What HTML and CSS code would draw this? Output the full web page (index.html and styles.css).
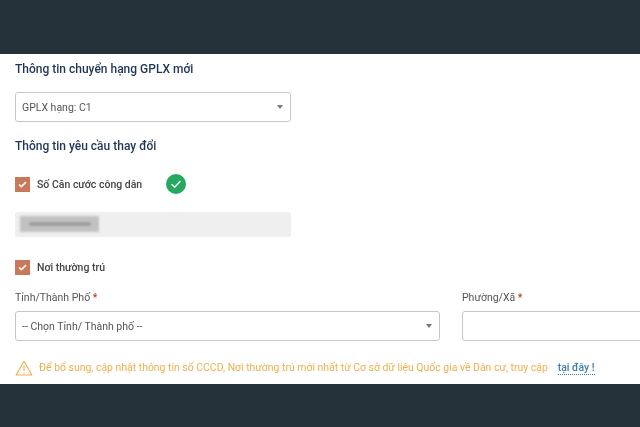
FILE: index.html
```html
<!DOCTYPE html>
<html lang="vi">
<head>
<meta charset="utf-8">
<title>Thông tin chuyển hạng GPLX</title>
<link rel="stylesheet" href="styles.css">
</head>
<body>
<div class="bar-top"></div>
<main class="content">
  <h2 class="heading first">Thông tin chuyển hạng GPLX mới</h2>
  <div class="select wide"><span>GPLX hạng: C1</span><i class="caret"></i></div>
  <h2 class="heading second">Thông tin yêu cầu thay đổi</h2>
  <div class="check-row one">
    <span class="checkbox"><svg width="11" height="9" viewBox="0 0 11 9"><path d="M2 4.5 4.4 6.6 9 2.2" fill="none" stroke="#fff" stroke-width="1.6"/></svg></span>
    <span class="check-label">Số Căn cước công dân</span>
    <span class="ok"><svg width="20" height="20" viewBox="0 0 20 20"><circle cx="10" cy="10" r="10" fill="#27a860"/><path d="M5.6 10.2 8.7 13.2 14.4 7" fill="none" stroke="#fff" stroke-width="1.3"/></svg></span>
  </div>
  <div class="readonly"><span class="masked"><span class="masked-line"></span></span></div>
  <div class="check-row two">
    <span class="checkbox"><svg width="11" height="9" viewBox="0 0 11 9"><path d="M2 4.5 4.4 6.6 9 2.2" fill="none" stroke="#fff" stroke-width="1.6"/></svg></span>
    <span class="check-label">Nơi thường trú</span>
  </div>
  <div class="fields">
    <div class="field city">
      <label class="field-label">Tỉnh/Thành Phố <b>*</b></label>
      <div class="select"><span>-- Chọn Tỉnh/ Thành phố --</span><i class="caret"></i></div>
    </div>
    <div class="field ward">
      <label class="field-label">Phường/Xã <b>*</b></label>
      <div class="select"></div>
    </div>
  </div>
  <p class="notice">
    <svg class="warn" width="18" height="16" viewBox="0 0 18 16"><path d="M9 1.2 16.9 15H1.1Z" fill="none" stroke="#eeb04d" stroke-width="1.1" stroke-linejoin="round"/><path d="M9 5.5V11M9 12.2V13.5" stroke="#eeb04d" stroke-width="1.1"/></svg>
    <span class="notice-text">Để bổ sung, cập nhật thông tin số CCCD, Nơi thường trú mới nhất từ Cơ sở dữ liệu Quốc gia về Dân cư, truy cập</span>
    <a class="link">tại đây !</a>
  </p>
</main>
<div class="bar-bottom"></div>
</body>
</html>
```
FILE: styles.css
```css
html, body { margin: 0; padding: 0; }
body {
  width: 640px;
  height: 427px;
  overflow: hidden;
  display: flex;
  flex-direction: column;
  background: #fff;
  font-family: Roboto, "Liberation Sans", sans-serif;
}
.bar-top { height: 54px; background: #24333a; flex: none; }
.bar-bottom { height: 43px; background: #24333a; flex: none; }
.content {
  height: 330px;
  flex: none;
  padding-left: 15px;
  overflow: hidden;
  filter: blur(0.35px);
}
.heading {
  margin: 0;
  font-size: 12px;
  line-height: 16px;
  font-weight: 500;
  color: #1f3556;
}
.heading.first { padding-top: 7px; }
.heading.second { margin-top: 16px; }
.select {
  box-sizing: border-box;
  height: 30px;
  display: flex;
  align-items: center;
  justify-content: space-between;
  padding: 0 7px 0 6px;
  background: #fff;
  border: 1px solid #c4c7ca;
  border-radius: 3px;
  font-size: 10.5px;
  color: #555;
}
.select.wide { width: 276px; margin-top: 15px; }
.caret {
  width: 0;
  height: 0;
  border-left: 3px solid transparent;
  border-right: 3px solid transparent;
  border-top: 4px solid #777;
}
.check-row { display: flex; align-items: center; }
.check-row.one { margin-top: 20px; height: 20px; }
.check-row.two { margin-top: 23px; height: 14px; }
.checkbox {
  width: 15px;
  height: 15px;
  display: flex;
  align-items: center;
  justify-content: center;
  background: #c9785a;
  flex: none;
}
.check-label {
  margin-left: 7px;
  font-size: 10.5px;
  font-weight: 500;
  color: #444;
}
.ok { margin-left: 24px; display: flex; }
.readonly {
  box-sizing: border-box;
  width: 276px;
  height: 25px;
  margin-top: 18px;
  padding: 4px 5px;
  background: #efefef;
  border-radius: 3px;
}
.masked {
  display: flex;
  align-items: center;
  justify-content: center;
  width: 79px;
  height: 16px;
  background: #c2c2c2;
  filter: blur(1px);
}
.masked-line {
  display: block;
  width: 62px;
  height: 4px;
  background: #a0a0a0;
}
.fields { display: flex; gap: 22px; margin-top: 17px; }
.field { flex: none; }
.field.city { width: 425px; }
.field.ward { width: 200px; }
.field-label {
  display: block;
  height: 16px;
  margin-bottom: 4px;
  font-size: 10.5px;
  line-height: 14px;
  color: #555;
}
.field-label b { color: #c0392b; font-weight: 500; }
.notice {
  margin: 19px 0 0;
  height: 16px;
  display: flex;
  align-items: center;
  font-size: 10.45px;
  line-height: 16px;
  color: #eeb04d;
  white-space: nowrap;
}
.warn { flex: none; }
.notice-text { margin-left: 6px; }
.link {
  margin-left: 10px;
  font-weight: 500;
  color: #3b7cb0;
  border-bottom: 1px dotted #3b7cb0;
  line-height: 12px;
}
```
